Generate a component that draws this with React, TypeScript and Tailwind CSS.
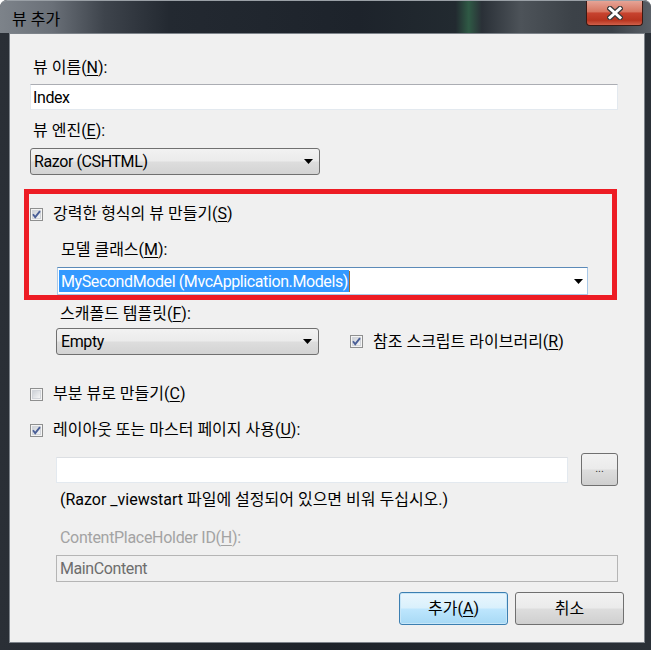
import { ReactNode } from "react"

// small helpers for the win7 look
function Acc({ children }: { children: ReactNode }) {
    return <span className="underline underline-offset-2 decoration-1">{children}</span>;
}

function CheckBox({ checked }: { checked: boolean }) {
    return (
        <svg width="13" height="13" viewBox="0 0 13 13" className="shrink-0">
            <defs>
                <linearGradient id="cbg" x1="0" y1="0" x2="1" y2="1">
                    <stop offset="0" stopColor="#cbcfd5" />
                    <stop offset="1" stopColor="#f7f7f7" />
                </linearGradient>
            </defs>
            <rect x="0.5" y="0.5" width="12" height="12" fill="#f4f4f4" stroke="#8e8f8f" />
            <rect x="2.5" y="2.5" width="8" height="8" fill="url(#cbg)" stroke="#d2d5da" />
            {checked && <path d="M3 6.3 L5.2 9.2 L10 3.2" fill="none" stroke="#4a5f97" strokeWidth="1.9" />}
        </svg>
    );
}

function Arrow() {
    return (
        <svg width="9" height="5" viewBox="0 0 9 5" className="shrink-0">
            <path d="M0 0H9L4.5 5Z" fill="#000" />
        </svg>
    );
}

function CheckRow({ checked, children }: { checked: boolean, children: ReactNode }) {
    return (
        <div className="flex items-center gap-[10px] h-[20px]">
            <CheckBox checked={checked} />
            <span>{children}</span>
        </div>
    );
}

export default function App() {
    return (
        <div className="w-[651px] h-[650px] flex flex-col bg-[linear-gradient(90deg,#2a2f36_0%,#1d2229_50%,#2a3037_100%)] rounded-t-[7px] text-[16px] leading-[20px] text-black font-['Roboto','Noto_Sans_CJK_KR',sans-serif] overflow-hidden">
            {/* title bar */}
            <div className="h-[33px] shrink-0 flex items-start justify-between bg-[linear-gradient(90deg,#7d838a_0%,#6a7078_8%,#3e444c_16%,#232931_26%,#1d232b_55%,#222a30_70%,#2f5a45_72%,#2a3037_74%,#4d5359_80%,#3c4248_88%,#3a4047_94%,#5a6067_100%)] rounded-t-[7px] border-t border-[#9aa0a6]">
                <div className="pl-[12px] pt-[9px]">뷰 추가</div>
                <div className="mr-[8px] w-[57px] h-[25px] rounded-b-[4px] border border-t-0 border-[#3a1a14] bg-[linear-gradient(#e6a496_0%,#d77560_45%,#c7432f_50%,#b8341f_80%,#d0604a_100%)] flex items-center justify-center">
                    <svg width="16" height="14" viewBox="0 0 16 14">
                        <path d="M3 2.5 L13 11.5 M13 2.5 L3 11.5" stroke="#3b3b3b" strokeWidth="5.5" strokeLinecap="square" />
                        <path d="M3 2.5 L13 11.5 M13 2.5 L3 11.5" stroke="#fff" strokeWidth="3" strokeLinecap="square" />
                    </svg>
                </div>
            </div>

            {/* client area */}
            <div className="flex-1 ml-[9px] mr-[6px] mb-[7px] bg-[#f0f0f0] border border-[#7d838a] flex flex-col pl-[20px] pt-[24px]">
                <div className="pl-[3px]">뷰 이름(<Acc>N</Acc>):</div>
                <div className="mt-[6px] w-[588px] h-[26px] bg-white border border-[#e3e9ef] border-t-[#abadb3] flex items-center pl-[2px] pt-[1px] tracking-[-0.4px]">Index</div>

                <div className="mt-[11px] pl-[3px]">뷰 엔진(<Acc>E</Acc>):</div>
                <div className="mt-[7px] w-[290px] h-[27px] rounded-[3px] border border-[#707070] bg-[linear-gradient(#f2f2f2_0%,#ebebeb_48%,#dddddd_52%,#d3d3d3_100%)] flex items-center justify-between pl-[3px] pr-[6px]">
                    <span className="tracking-[-0.4px] pt-[1px]">Razor (CSHTML)</span>
                    <Arrow />
                </div>

                {/* highlighted section */}
                <div className="mt-[14px] -ml-[6px] w-[593px] h-[111px] border-[5px] border-[#ed1c24] flex flex-col pl-[1px] pt-[10px]">
                    <CheckRow checked={true}>강력한 형식의 뷰 만들기(<Acc>S</Acc>)</CheckRow>
                    <div className="mt-[16px] pl-[31px]">모델 클래스(<Acc>M</Acc>):</div>
                    <div className="mt-[7px] ml-[27px] w-[531px] h-[28px] bg-white border border-[#a9c9e8] border-t-[#5b8ab8] flex items-center justify-between pl-[1px] pr-[4px]">
                        <span className="flex items-center">
                            <span className="bg-[#3399ff] text-white pl-[2px] pr-[1px] leading-[21px] tracking-[-0.4px] pt-[1px]">MySecondModel (MvcApplication.Models)</span>
                            <span className="w-[1px] h-[21px] bg-[#a56a2c]"></span>
                        </span>
                        <Arrow />
                    </div>
                </div>

                <div className="mt-[4px] pl-[30px]">스캐폴드 템플릿(<Acc>F</Acc>):</div>
                <div className="mt-[4px] pl-[26px] flex items-center gap-[31px]">
                    <div className="w-[263px] h-[27px] rounded-[3px] border border-[#707070] bg-[linear-gradient(#f2f2f2_0%,#ebebeb_48%,#dddddd_52%,#d3d3d3_100%)] flex items-center justify-between pl-[4px] pr-[6px]">
                        <span className="tracking-[-0.4px] pt-[1px]">Empty</span>
                        <Arrow />
                    </div>
                    <CheckRow checked={true}>참조 스크립트 라이브러리(<Acc>R</Acc>)</CheckRow>
                </div>

                <div className="mt-[29px]">
                    <CheckRow checked={false}>부분 뷰로 만들기(<Acc>C</Acc>)</CheckRow>
                </div>
                <div className="mt-[16px]">
                    <CheckRow checked={true}>레이아웃 또는 마스터 페이지 사용(<Acc>U</Acc>):</CheckRow>
                </div>

                <div className="mt-[13px] pl-[26px] flex items-center gap-[13px]">
                    <div className="w-[512px] h-[26px] bg-white border border-[#e3e9ef] border-t-[#dcdfe3]"></div>
                    <div className="w-[37px] h-[33px] rounded-[3px] border border-[#707070] bg-[linear-gradient(#f2f2f2_0%,#ebebeb_48%,#dddddd_52%,#cfcfcf_100%)] flex items-center justify-center text-[11px] leading-none pb-[2px] text-[#333]">...</div>
                </div>
                <div className="mt-[4px] pl-[30px]">(Razor _viewstart 파일에 설정되어 있으면 비워 두십시오.)</div>

                <div className="mt-[18px] pl-[30px] text-[#a3a3a3] tracking-[-0.3px]">ContentPlaceHolder ID(<Acc>H</Acc>):</div>
                <div className="mt-[7px] ml-[26px] w-[562px] h-[27px] bg-[#f0f0f0] border border-[#b5b5b5] flex items-center pl-[3px] pt-[1px] text-[#6d6d6d] tracking-[-0.4px]">MainContent</div>

                <div className="mt-[10px] flex justify-end gap-[7px] pr-[20px]">
                    <div className="w-[109px] h-[33px] rounded-[3px] border border-[#3c7fb1] bg-[linear-gradient(#eaf6fd_0%,#d9f0fc_48%,#bee6fd_52%,#a7d9f5_100%)] shadow-[inset_0_0_0_1px_#c7e6f8] flex items-center justify-center">추가(<Acc>A</Acc>)</div>
                    <div className="w-[109px] h-[33px] rounded-[3px] border border-[#707070] bg-[linear-gradient(#f2f2f2_0%,#ebebeb_48%,#dddddd_52%,#cfcfcf_100%)] flex items-center justify-center">취소</div>
                </div>
            </div>
        </div>
    );
}
